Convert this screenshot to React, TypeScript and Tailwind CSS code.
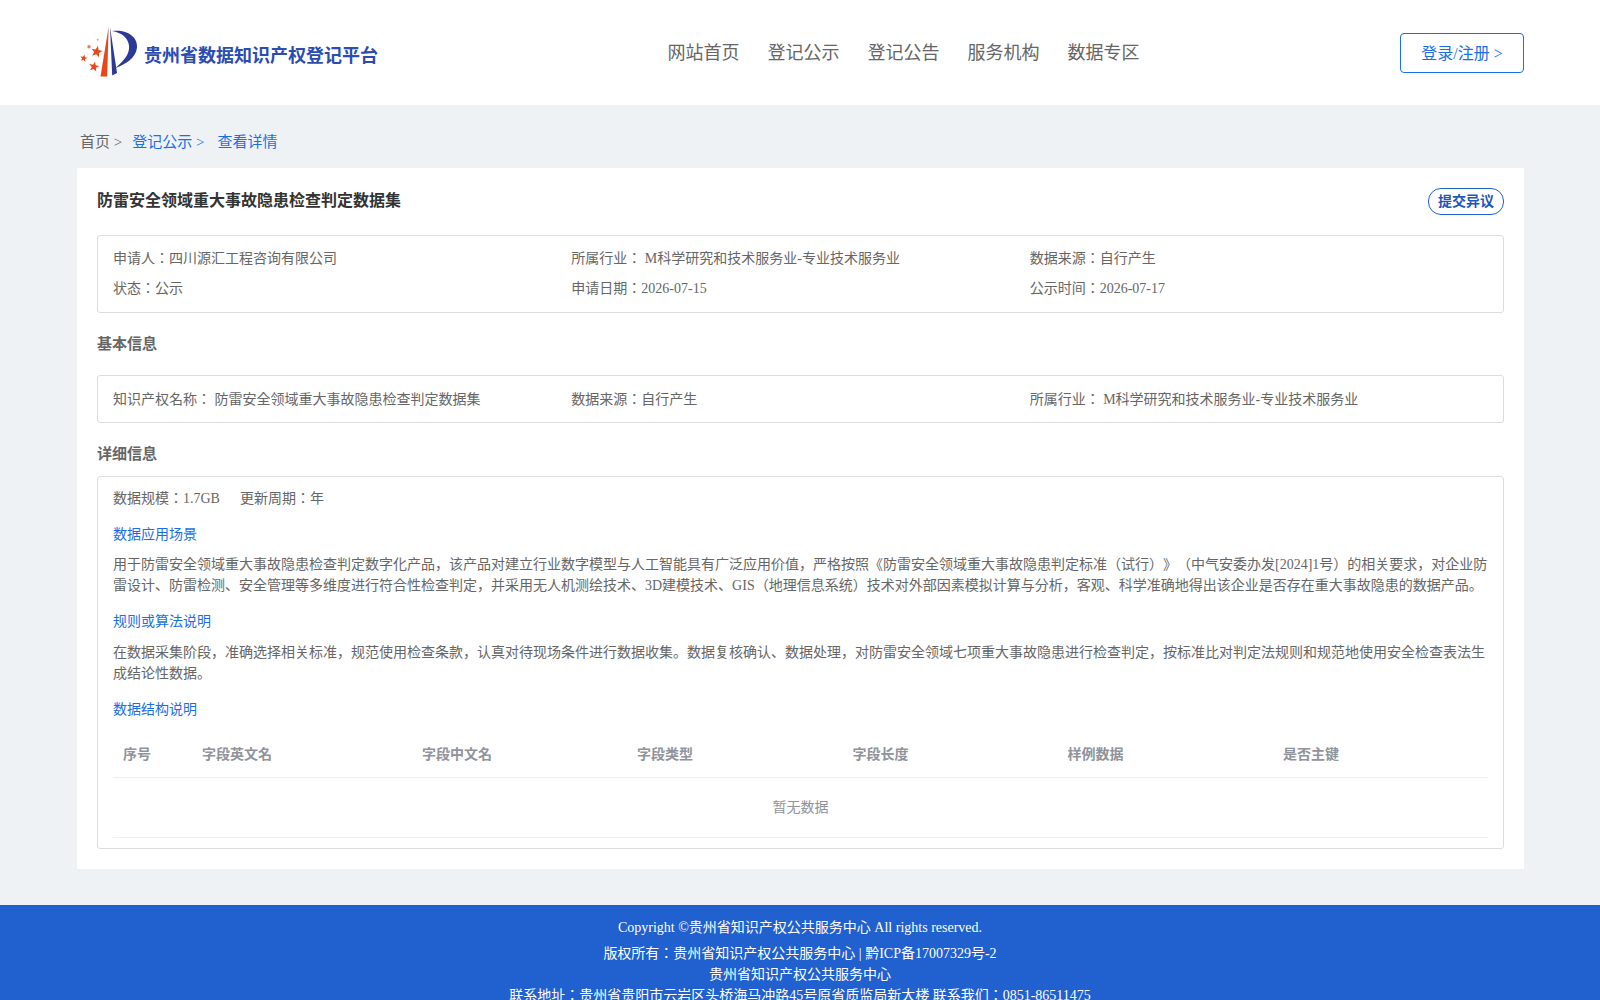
const star = (cx: number, cy: number, r: number) =>
  Array.from({ length: 10 }, (_, i) => {
    const a = -Math.PI / 2 + 0.2 + (i * Math.PI) / 5;
    const d = i % 2 ? r * 0.42 : r;
    return `${(cx + d * Math.cos(a)).toFixed(2)},${(cy + d * Math.sin(a)).toFixed(2)}`;
  }).join(' ');

function Logo() {
  return (
    <svg viewBox="0 0 60 52" className="w-[60px] h-[52px] shrink-0">
      <path d="M28.6 0 L27.2 49.5 L20.5 49.5 Z" fill="#e8471a" />
      <path d="M30 0 L37 46 L32.2 48.5 Z" fill="#2b3a96" />
      <path d="M32 4 C47 2 58 10 57 20.5 C56 31 46 37 35.5 41 C44 33.5 50 27 49 18.5 C48 10.5 42 6 32 4 Z" fill="#2b3a96" />
      <polygon points={star(16.7, 24.7, 6)} fill="#e8471a" />
      <polygon points={star(14, 39.7, 5.4)} fill="#e8471a" />
      <polygon points={star(3.7, 31.3, 3.8)} fill="#e8471a" />
      <circle cx="9" cy="19.7" r="1.7" fill="#ee7a55" />
      <circle cx="17.7" cy="12.7" r="1" fill="#f09a7d" />
    </svg>
  );
}

const nav = ['网站首页', '登记公示', '登记公告', '服务机构', '数据专区'];
const cols = ['序号', '字段英文名', '字段中文名', '字段类型', '字段长度', '样例数据', '是否主键'];

export default function App() {
  return (
    <div className="min-h-screen bg-[#eff2f5] text-[14px] text-[#666] font-['Liberation_Serif','Noto_Sans_CJK_JP',serif] [text-spacing-trim:space-all]">
      <header className="h-[105px] bg-white">
        <div className="w-[1447px] ml-[77px] h-full flex items-center justify-between">
          <div className="flex items-center pl-[3px] pt-[1px] w-[330px]">
            <Logo />
            <span className="ml-[4px] mt-[6px] text-[18px] font-bold text-[#2b4cb3]">贵州省数据知识产权登记平台</span>
          </div>
          <nav className="flex gap-[28px] pt-[2px] text-[18px] text-[#666]">
            {nav.map((n) => (
              <a key={n}>{n}</a>
            ))}
          </nav>
          <button className="w-[124px] h-[40px] pt-[2px] border border-[#1a6fe8] rounded-[4px] text-[16px] text-[#1a6fe8]">
            登录/注册 &gt;
          </button>
        </div>
      </header>

      <div className="w-[1447px] ml-[77px]">
        <div className="h-[63px] flex items-center pl-[3px] text-[15px] pt-[11px]">
          <span>首页 &gt;</span>
          <span className="ml-[10px] text-[#1a6fe8]">登记公示 &gt;</span>
          <span className="ml-[13px] text-[#1a6fe8]">查看详情</span>
        </div>

        <main className="bg-white px-[20px] pt-[20px] pb-[20px]">
          <div className="h-[47px] flex justify-between items-start">
            <h1 className="mt-[1px] text-[16px] font-bold text-[#333] leading-[24px]">防雷安全领域重大事故隐患检查判定数据集</h1>
            <button className="w-[76px] h-[27px] border border-[#1d62d0] rounded-[13px] font-bold text-[#1d55b8]">提交异议</button>
          </div>

          <div className="border border-[#ddd] rounded-[3px] h-[78px] px-[15px] pt-[7px] grid grid-cols-3 auto-rows-[30px] items-center">
            <div>申请人：四川源汇工程咨询有限公司</div>
            <div>所属行业： M科学研究和技术服务业-专业技术服务业</div>
            <div>数据来源：自行产生</div>
            <div>状态：公示</div>
            <div>申请日期：2026-07-15</div>
            <div>公示时间：2026-07-17</div>
          </div>

          <h2 className="h-[62px] flex items-center text-[15px] font-bold">基本信息</h2>

          <div className="border border-[#ddd] rounded-[3px] h-[48px] px-[15px] grid grid-cols-3 items-center">
            <div>知识产权名称： 防雷安全领域重大事故隐患检查判定数据集</div>
            <div>数据来源：自行产生</div>
            <div>所属行业： M科学研究和技术服务业-专业技术服务业</div>
          </div>

          <h2 className="h-[53px] pt-[9px] flex items-center text-[15px] font-bold">详细信息</h2>

          <div className="border border-[#ddd] rounded-[3px] px-[15px] pb-[10px]">
            <div className="h-[43px] flex items-center gap-[20px]">
              <span>数据规模：1.7GB</span>
              <span>更新周期：年</span>
            </div>
            <h3 className="mt-[4px] leading-[21px] text-[#1a6fe8]">数据应用场景</h3>
            <p className="mt-[9px] leading-[21px]">
              用于防雷安全领域重大事故隐患检查判定数字化产品，该产品对建立行业数字模型与人工智能具有广泛应用价值，严格按照《防雷安全领域重大事故隐患判定标准（试行）》（中气安委办发[2024]1号）的相关要求，对企业防雷设计、防雷检测、安全管理等多维度进行符合性检查判定，并采用无人机测绘技术、3D建模技术、GIS（地理信息系统）技术对外部因素模拟计算与分析，客观、科学准确地得出该企业是否存在重大事故隐患的数据产品。
            </p>
            <h3 className="mt-[15px] leading-[21px] text-[#1a6fe8]">规则或算法说明</h3>
            <p className="mt-[10px] leading-[21px]">
              在数据采集阶段，准确选择相关标准，规范使用检查条款，认真对待现场条件进行数据收集。数据复核确认、数据处理，对防雷安全领域七项重大事故隐患进行检查判定，按标准比对判定法规则和规范地使用安全检查表法生成结论性数据。
            </p>
            <h3 className="mt-[15px] leading-[21px] text-[#1a6fe8]">数据结构说明</h3>
            <div className="mt-[11px] h-[47px] grid grid-cols-[79px_220px_215px_215.5px_215px_215.5px_1fr] items-center border-b border-[#ebeef5] font-bold text-[#909399]">
              {cols.map((c) => (
                <div key={c} className="px-[10px]">
                  {c}
                </div>
              ))}
            </div>
            <div className="h-[60px] flex items-center justify-center border-b border-[#ebeef5] text-[#909399]">暂无数据</div>
          </div>
        </main>
      </div>

      <footer className="mt-[36px] bg-[#2060cf] text-white text-center pt-[12px] pb-[13px] leading-[21px]">
        <div className="mb-[5px]">Copyright ©贵州省知识产权公共服务中心 All rights reserved.</div>
        <div>版权所有：贵州省知识产权公共服务中心 | 黔ICP备17007329号-2</div>
        <div>贵州省知识产权公共服务中心</div>
        <div>联系地址：贵州省贵阳市云岩区头桥海马冲路45号原省质监局新大楼 联系我们：0851-86511475</div>
      </footer>
    </div>
  );
}
